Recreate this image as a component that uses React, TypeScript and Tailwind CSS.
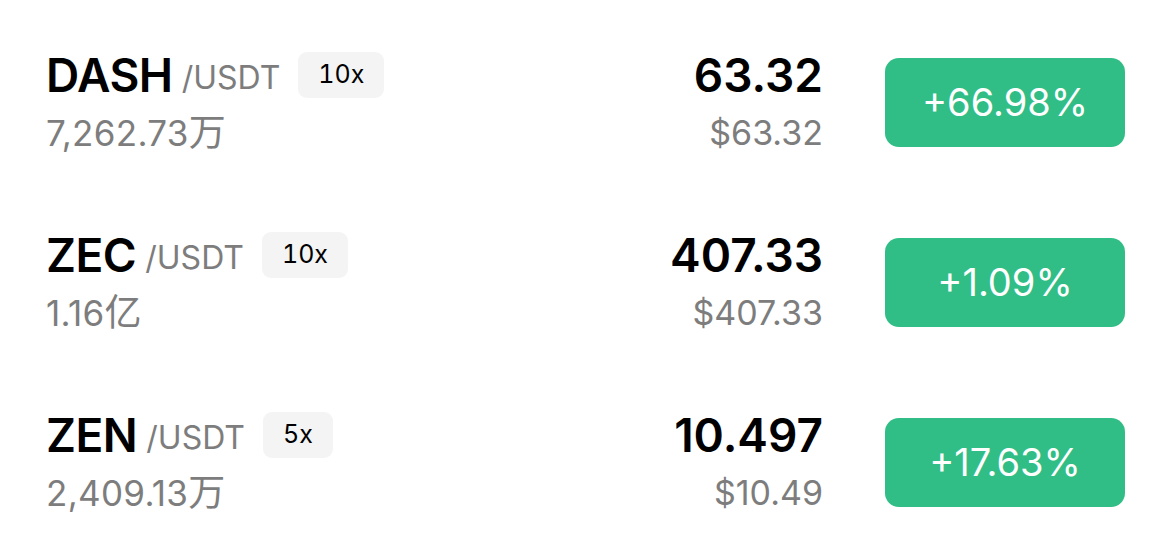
import React from "react";

type Row = {
  sym: string;
  lev: string;
  num: string;
  unit: string;
  price: string;
  usd: string;
  chg: string;
};

const rows: Row[] = [
  { sym: "DASH", lev: "10x", num: "7,262.73", unit: "万", price: "63.32", usd: "$63.32", chg: "+66.98%" },
  { sym: "ZEC", lev: "10x", num: "1.16", unit: "亿", price: "407.33", usd: "$407.33", chg: "+1.09%" },
  { sym: "ZEN", lev: "5x", num: "2,409.13", unit: "万", price: "10.497", usd: "$10.49", chg: "+17.63%" },
];

export default function App() {
  return (
    <div
      className="w-[1170px] h-[540px] overflow-hidden bg-white pt-[10px]"
      style={{ fontFamily: 'Inter, "Noto Sans CJK SC", sans-serif' }}
    >
      {rows.map((r) => (
        <div key={r.sym} className="h-[180px] flex items-center pl-[46px] pr-[45px]">
          <div className="flex-1 flex flex-col">
            <div className="flex items-center h-[56px]">
              <span className="text-[46px] leading-[56px] font-[560] text-black tracking-[-0.5px]">{r.sym}</span>
              <span className="ml-[9px] text-[32px] leading-[56px] text-[#7d7d7d] mt-[6px]">/USDT</span>
              <span className="ml-[18px] h-[46px] px-[20px] rounded-[9px] bg-[#f4f4f4] flex items-center text-[25px] text-black tabular-nums">
                {r.lev}
              </span>
            </div>
            <div className="mt-[10px] text-[35px] leading-[40px] text-[#7d7d7d] tracking-[0.3px]">
              {r.num}
              <span className="text-[37px]">{r.unit}</span>
            </div>
          </div>
          <div className="flex flex-col items-end">
            <div className="h-[56px] text-[46px] leading-[56px] font-[560] text-black">{r.price}</div>
            <div className="mt-[10px] text-[34px] leading-[40px] text-[#7d7d7d]">{r.usd}</div>
          </div>
          <div className="ml-[62px] w-[240px] h-[89px] rounded-[14px] bg-[#30be86] flex items-center justify-center text-white text-[38px] mt-[4px]">
            {r.chg}
          </div>
        </div>
      ))}
    </div>
  );
}
